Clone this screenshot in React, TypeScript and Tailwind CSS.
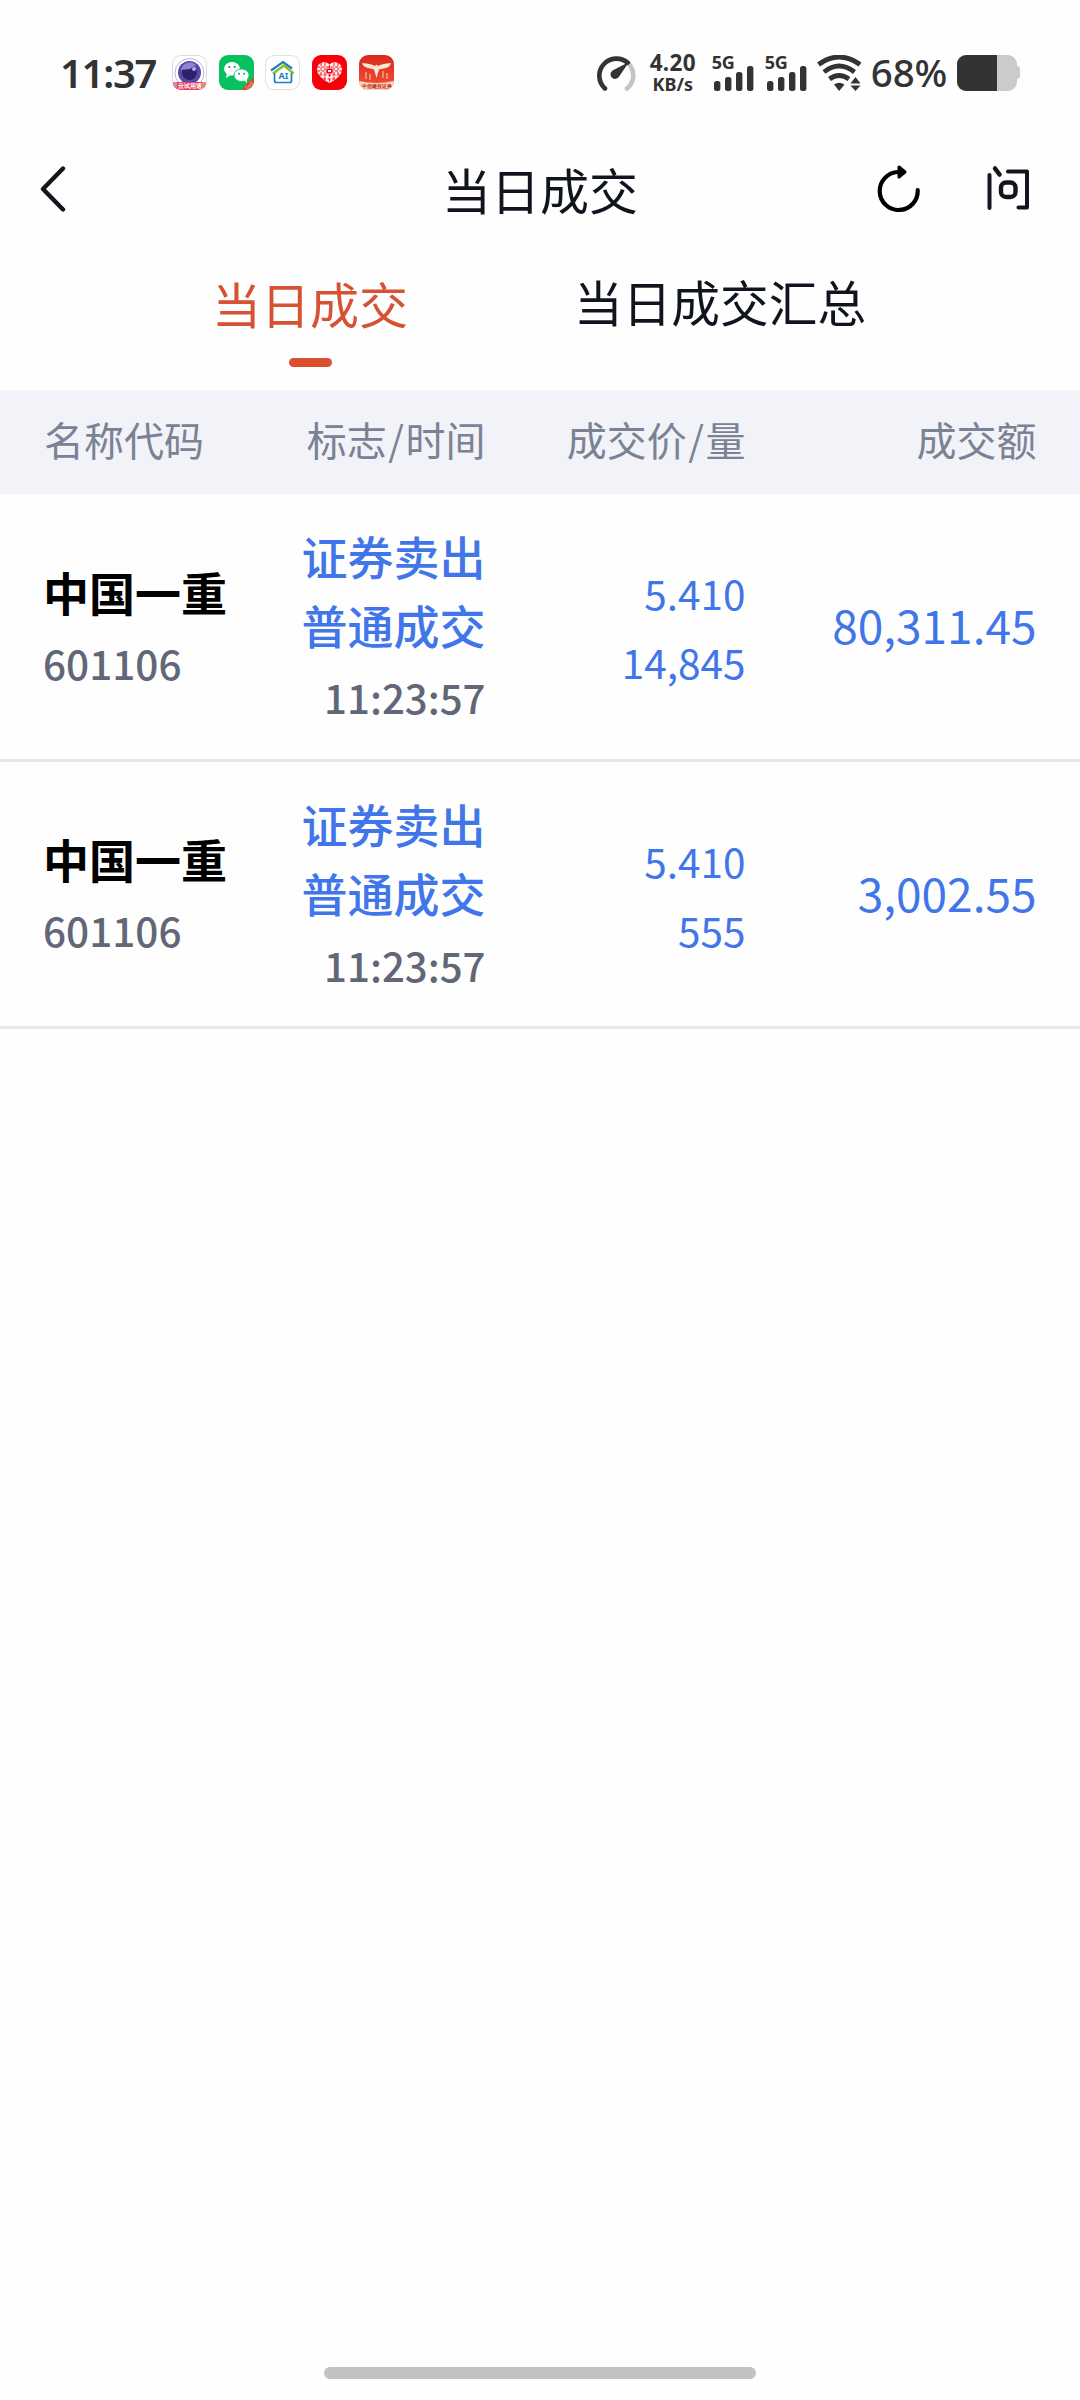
import type { ReactNode } from 'react';

interface Trade {
  name: string;
  code: string;
  side: string;
  kind: string;
  time: string;
  price: string;
  volume: string;
  amount: string;
}

const trades: Trade[] = [
  { name: '中国一重', code: '601106', side: '证券卖出', kind: '普通成交', time: '11:23:57', price: '5.410', volume: '14,845', amount: '80,311.45' },
  { name: '中国一重', code: '601106', side: '证券卖出', kind: '普通成交', time: '11:23:57', price: '5.410', volume: '555', amount: '3,002.55' },
];

function AppBadge({ className, children }: { className: string; children: ReactNode }) {
  return (
    <div className={`h-[35px] w-[35px] overflow-hidden rounded-[9px] ${className}`}>
      <svg viewBox="0 0 35 35" className="h-full w-full">
        {children}
      </svg>
    </div>
  );
}

function NotificationIcons() {
  return (
    <div className="ml-[14px] flex gap-[11.7px]">
      <AppBadge className="bg-white ring-1 ring-inset ring-[#dcdce2]">
        <circle cx="17.5" cy="18" r="14.5" fill="none" stroke="#b9b6dd" strokeWidth="1" />
        <circle cx="17.5" cy="17.5" r="11.5" fill="#5a4aa8" />
        <circle cx="17.5" cy="17.5" r="7.5" fill="#30206c" />
        <path d="M9 15a9 9 0 0 1 15-5l-6 4z" fill="#8f83d6" />
        <circle cx="22" cy="14" r="2" fill="#b6aef0" />
        <path d="M1 27h33v5q-1 3-5 3H6q-4 0-5-4z" fill="#e2455f" />
        <path d="M1 27h4v7q-4-1-4-5z" fill="#e77bb6" />
        <path d="M30 27h4v3q0 4-4 5z" fill="#f08b6d" />
        <text x="17.5" y="33.4" textAnchor="middle" fontSize="6" fontWeight="700" fill="#fff">云试用通</text>
      </AppBadge>
      <AppBadge className="bg-[#07c160]">
        <ellipse cx="13" cy="13.8" rx="8" ry="6.8" fill="#fff" />
        <path d="M8 18l-1 5 5-3z" fill="#fff" />
        <ellipse cx="22.5" cy="20.2" rx="7.6" ry="6.3" fill="#fff" stroke="#07c160" strokeWidth="0.9" />
        <path d="M25 25l3 3 0-5z" fill="#fff" />
        <circle cx="10.3" cy="12" r="1.1" fill="#07a552" />
        <circle cx="15.7" cy="12" r="1.1" fill="#07a552" />
        <circle cx="20" cy="18.8" r="1" fill="#07a552" />
        <circle cx="25" cy="18.8" r="1" fill="#07a552" />
        <path d="M35 22v13H22z" fill="#e2472f" />
        <text x="30.5" y="32.5" textAnchor="middle" fontSize="5" fill="#fbc9a8" transform="rotate(-45 30.5 31)">2nd</text>
      </AppBadge>
      <AppBadge className="bg-white ring-1 ring-inset ring-[#dfe1e3]">
        <path d="M6 15.5L18 7l9 6.5" fill="none" stroke="#1c7fc4" strokeWidth="2.2" />
        <path d="M8 18.5L19 10.5l9.5 8" fill="none" stroke="#8dbf2e" strokeWidth="2.6" />
        <path d="M9.5 18v7.5q0 2 2 2h13q2 0 2-2V18" fill="none" stroke="#1c7fc4" strokeWidth="1.7" />
        <text x="18.3" y="24.3" textAnchor="middle" fontSize="9" fontWeight="700" fill="#1c7fc4">AI</text>
      </AppBadge>
      <AppBadge className="bg-[#f5000b]">
        <path d="M17.5 28C10 24 4.5 19.5 5 13.5 6 7 13.5 5.5 17.5 9.5 21.5 5.5 29 7 30 13.5 30.5 19.5 25 24 17.5 28z" fill="#ffecec" />
        <path d="M9 8v13M13 8v17M17.5 10v18M22 8v17M26 8v13M5 12h25M5 16h25M7 20h21M11 24h13" fill="none" stroke="#f5000b" strokeWidth="0.9" strokeDasharray="3 1.5" />
        <path d="M14.5 13.5h6v5h-6z" fill="#f5000b" />
        <path d="M16 15h3v2h-3z" fill="#fff" />
      </AppBadge>
      <AppBadge className="bg-gradient-to-b from-[#d9281c] to-[#f0513a]">
        <path d="M7 17v7M11 19v6M24 16v7M28 18v6" stroke="#f78a68" strokeWidth="2" />
        <path d="M3 8q10 1 13 3l1.5-1.5L19 11q3-2 13-3-1 4-5 5l-7 1.500L17.5 23 15 14.5l-6-1.500Q4 12 3 8z" fill="#fbe6d2" />
        <path d="M0 26q17.5 4 35 0v9H0z" fill="#f8d9bd" />
        <text x="17.5" y="33" textAnchor="middle" fontSize="5.4" fontWeight="700" fill="#c5271b">中信建投证券</text>
      </AppBadge>
    </div>
  );
}

function SignalBars({ className }: { className: string }) {
  return (
    <div className={`relative h-[36px] w-[42px] ${className}`}>
      <span className="absolute left-0 top-[1px] font-['Noto_Sans'] text-[18px] font-bold leading-[12px] tracking-[-0.3px]">5G</span>
      <svg viewBox="0 0 42 36" className="h-full w-full" fill="#333">
        <rect x="2" y="26" width="6.4" height="10" rx="2.5" />
        <rect x="13" y="22" width="6.4" height="14" rx="2.5" />
        <rect x="24" y="17" width="6.4" height="19" rx="2.5" />
        <rect x="35" y="11" width="6.4" height="25" rx="2.5" />
      </svg>
    </div>
  );
}

function StatusBar() {
  return (
    <div className="flex h-[145px] items-center pl-[60px] font-['Noto_Sans'] text-[#333]">
      <span className="w-[98px] whitespace-nowrap text-[40px] font-semibold leading-none tracking-[-1.3px]">11:37</span>
      <NotificationIcons />

      <svg width="40" height="36" viewBox="0 0 40 36" className="ml-[202px]" fill="none" strokeLinecap="round" strokeWidth="4.6">
        <path d="M9 33.5A17 17 0 1 1 32 8" stroke="#333" />
        <path d="M34.5 11A17 17 0 0 1 31 33.5" stroke="#c4c4c4" />
        <path d="M33 7L16.5 15.5Q14 17.5 14.6 20.5 16.2 24.5 20 23.8 22.5 23 23.5 21z" fill="#333" strokeWidth="2" />
      </svg>
      <div className="ml-[12px] flex h-[36px] w-[50px] flex-col items-center font-bold">
        <span className="mt-[-2px] text-[22.5px] leading-[19px] tracking-[0.3px]">4.20</span>
        <span className="mt-[3px] text-[18px] leading-[19px]">KB/s</span>
      </div>
      <SignalBars className="ml-[14px]" />
      <SignalBars className="ml-[11px]" />

      <svg width="46" height="36" viewBox="0 0 46 36" className="ml-[10px]" fill="none" stroke="#333" strokeWidth="4.8">
        <path d="M1.5 9.5Q22 -5.5 43 9.5" />
        <path d="M7 17Q22 5 37.5 17" />
        <path d="M12.5 24Q22 17 32 24" />
        <path d="M17 29.5Q22 26 27.5 29.5L22.2 36z" fill="#333" stroke="none" />
        <path d="M38.5 22l5 6.5h-10zM38.5 36l5-5.5h-10z" fill="#333" stroke="none" />
      </svg>
      <span className="ml-[8px] w-[77px] whitespace-nowrap text-[38.5px] font-medium leading-none tracking-[-0.1px]">68%</span>
      <div className="ml-[9px] flex items-center">
        <div className="h-[36px] w-[60px] overflow-hidden rounded-[9px] bg-[#cbcbcb]">
          <div className="h-full w-[40px] bg-[#333]" />
        </div>
        <div className="h-[13px] w-[3px] rounded-r-[3px] bg-[#cbcbcb]" />
      </div>
    </div>
  );
}

function NavBar() {
  return (
    <div className="flex h-[86px] items-center justify-between pl-[40px] pr-[50px]">
      <div className="flex w-[163px]">
        <svg width="26" height="46" viewBox="0 0 26 46" className="mt-[2px]" fill="none" stroke="#11151d" strokeWidth="4.4" strokeLinecap="round" strokeLinejoin="round">
          <path d="M23 2.5L3 23l20 20.5" />
        </svg>
      </div>
      <h1 className="mt-[2px] text-[49px] leading-[72px]">当日成交</h1>
      <div className="flex w-[153px] justify-between">
        <svg width="44" height="48" viewBox="0 0 44 48" fill="none" stroke="#000" strokeWidth="4.2" strokeLinecap="round" strokeLinejoin="round">
          <path d="M40.7 26A19 19 0 1 1 21 8" />
          <path d="M22 3l6 5-6 5z" fill="#000" strokeWidth="3" />
        </svg>
        <svg width="43" height="46" viewBox="0 0 43 46" fill="none" stroke="#11151d" strokeWidth="4" strokeLinecap="round" strokeLinejoin="round">
          <path d="M2.5 11v33" />
          <path d="M8 4.5l4.5 6" strokeWidth="4.5" />
          <path d="M21 7.5h19v36h-8.5" />
          <rect x="14" y="18.5" width="14.5" height="14.5" rx="5" strokeWidth="4.4" />
        </svg>
      </div>
    </div>
  );
}

function Tabs() {
  return (
    <div className="flex h-[159px]">
      <div className="ml-[211px] flex w-[198px] flex-col items-center">
        <span className="mt-[36px] whitespace-nowrap text-[49px] leading-[72px] text-[#d65233]">当日成交</span>
        <span className="mt-[19px] h-[9px] w-[43px] rounded-full bg-[#dc4f2e]" />
      </div>
      <span className="ml-[165px] mt-[34px] whitespace-nowrap text-[48.7px] leading-[72px]">当日成交汇总</span>
    </div>
  );
}

function Slash() {
  return <span className="mx-[1.5px]">/</span>;
}

function TableHeader() {
  return (
    <div className="flex h-[104px] items-center bg-[#f2f3f8] pb-[6px] pl-[44px] pr-[43.5px] text-[40px] leading-none text-[#7b8295]">
      <span className="w-[200px]">名称代码</span>
      <span className="w-[241.5px] text-right">标志<Slash />时间</span>
      <span className="w-[260px] text-right">成交价<Slash />量</span>
      <span className="flex-1 text-right">成交额</span>
    </div>
  );
}

function TradeRow({ trade }: { trade: Trade }) {
  return (
    <div className="flex h-[267.6px] items-center border-b-[3px] border-[#e5e6e9] pl-[43px] pr-[43.5px] pt-[1px] text-[41px] text-[#4176ea]">
      <div className="w-[201px] leading-[71px]">
        <div className="whitespace-nowrap text-[46px] font-bold text-black">{trade.name}</div>
        <div className="text-[40.5px] font-medium text-[#616777]">{trade.code}</div>
      </div>
      <div className="w-[241.5px] pt-[2px] text-right leading-[69px]">
        <div className="text-[46px] font-medium">{trade.side}</div>
        <div className="text-[46px] font-medium">{trade.kind}</div>
        <div className="text-[40.2px] font-medium leading-[75px] text-[#616777]">{trade.time}</div>
      </div>
      <div className="w-[260px] pt-[1px] text-right text-[40.5px] leading-[69px]">
        <div>{trade.price}</div>
        <div>{trade.volume}</div>
      </div>
      <div className="flex-1 pb-[4px] text-right text-[46px]">{trade.amount}</div>
    </div>
  );
}

export default function App() {
  return (
    <div className="flex h-[2400px] w-[1080px] flex-col bg-[#fefefe] font-['Noto_Sans_CJK_SC',sans-serif] text-[#10141e]">
      <StatusBar />
      <NavBar />
      <Tabs />
      <TableHeader />
      {trades.map((trade) => (
        <TradeRow key={trade.amount} trade={trade} />
      ))}
      <div className="mb-[21px] mt-auto h-[12px] w-[432px] self-center rounded-full bg-[#c2c2c2]" />
    </div>
  );
}
